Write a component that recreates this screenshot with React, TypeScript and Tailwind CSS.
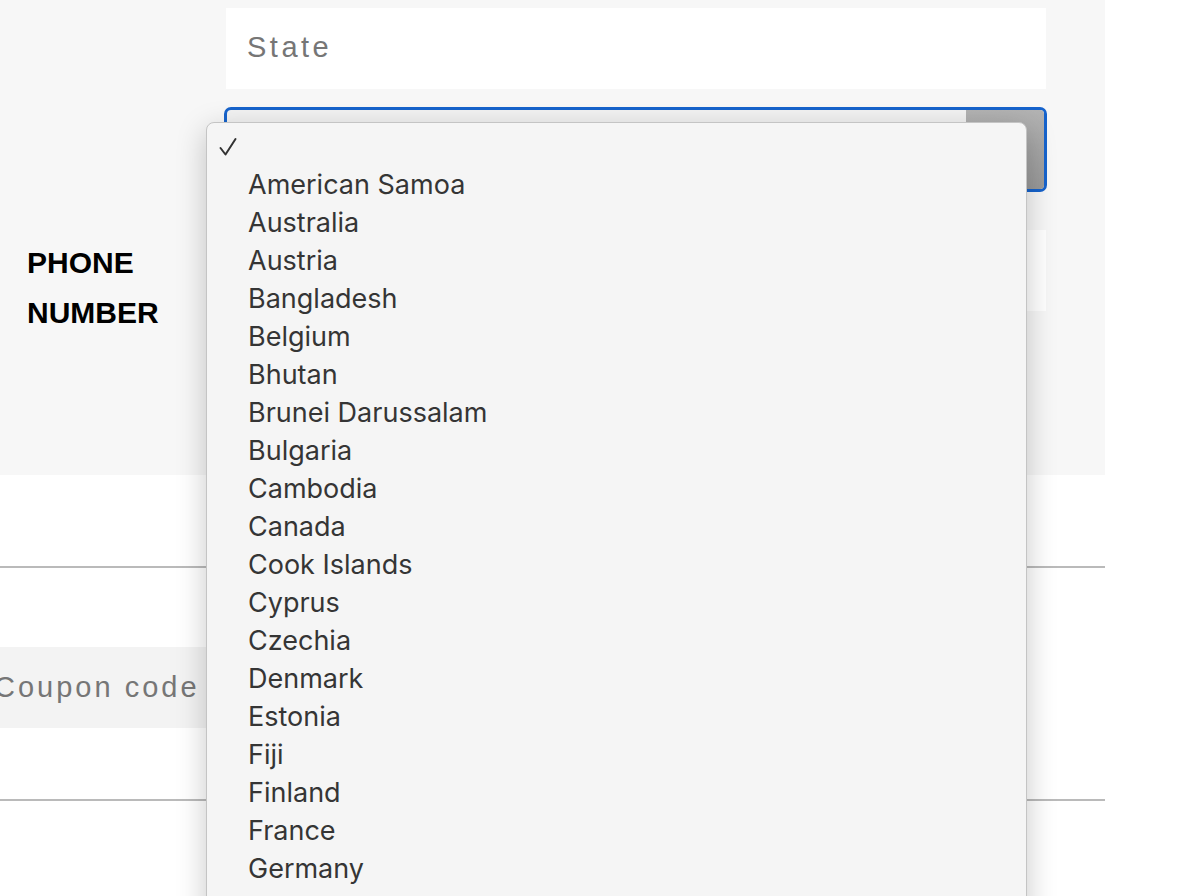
import React from 'react';

const countries = [
  'American Samoa',
  'Australia',
  'Austria',
  'Bangladesh',
  'Belgium',
  'Bhutan',
  'Brunei Darussalam',
  'Bulgaria',
  'Cambodia',
  'Canada',
  'Cook Islands',
  'Cyprus',
  'Czechia',
  'Denmark',
  'Estonia',
  'Fiji',
  'Finland',
  'France',
  'Germany',
  'Greece',
  'Hong Kong',
];

const CheckMark = () => (
  <svg width="18" height="20" viewBox="0 0 18 20" fill="none" className="block">
    <path d="M1.5 11 L6.5 17.5 L16.5 2" stroke="#333" strokeWidth="2" strokeLinecap="round" strokeLinejoin="round" />
  </svg>
);

const CountryMenu = () => (
  <div className="absolute left-[206px] top-[122px] w-[821px] h-[820px] overflow-hidden rounded-[8px] border border-[#c4c4c4] bg-[#f5f5f5] shadow-[0_8px_30px_rgba(0,0,0,0.22)] pt-[4px] font-['Inter',sans-serif] text-[27px] text-[#353535]">
    <div className="h-[38px] flex items-center pl-[12px] pt-[2px]">
      <CheckMark />
    </div>
    {countries.map((c) => (
      <div key={c} className="h-[38px] flex items-center pl-[41px] leading-none">
        {c}
      </div>
    ))}
  </div>
);

export default function App() {
  return (
    <div className="relative w-[1202px] h-[896px] overflow-hidden bg-white font-['Liberation_Sans',Arial,sans-serif]">
      {/* address panel */}
      <div className="w-[1105px] h-[475px] bg-[#f7f7f7] pt-[8px]">
        <div className="ml-[226px] w-[820px] h-[81px] bg-white flex items-center pl-[21px] pb-[2px] text-[29px] tracking-[3.5px] text-[#767676]">
          State
        </div>

        <div className="ml-[224px] mt-[18px] w-[823px] h-[85px] rounded-[7px] border-[3px] border-[#1663cc] bg-[#f3f3f3] flex justify-end">
          <div className="w-[78px] h-full rounded-r-[4px] bg-gradient-to-b from-[#b3b3b3] to-[#999999]" />
        </div>

        <div className="mt-[38px] flex">
          <div className="w-[226px] pl-[27px] pt-[8px] text-[30px] font-bold leading-[50px] text-black">
            PHONE
            <br />
            NUMBER
          </div>
          <div className="w-[820px] h-[81px] bg-white" />
        </div>
      </div>

      {/* coupon section */}
      <div className="w-[1105px]">
        <div className="mt-[91px] h-[2px] bg-[#bababa]" />
        <div className="mt-[79px] ml-[-18px] w-[820px] h-[81px] bg-[#f3f3f3] flex items-center pl-[12px] text-[29px] tracking-[3px] text-[#767676]">
          Coupon code
        </div>
        <div className="mt-[71px] h-[2px] bg-[#bababa]" />
      </div>

      <CountryMenu />
    </div>
  );
}
